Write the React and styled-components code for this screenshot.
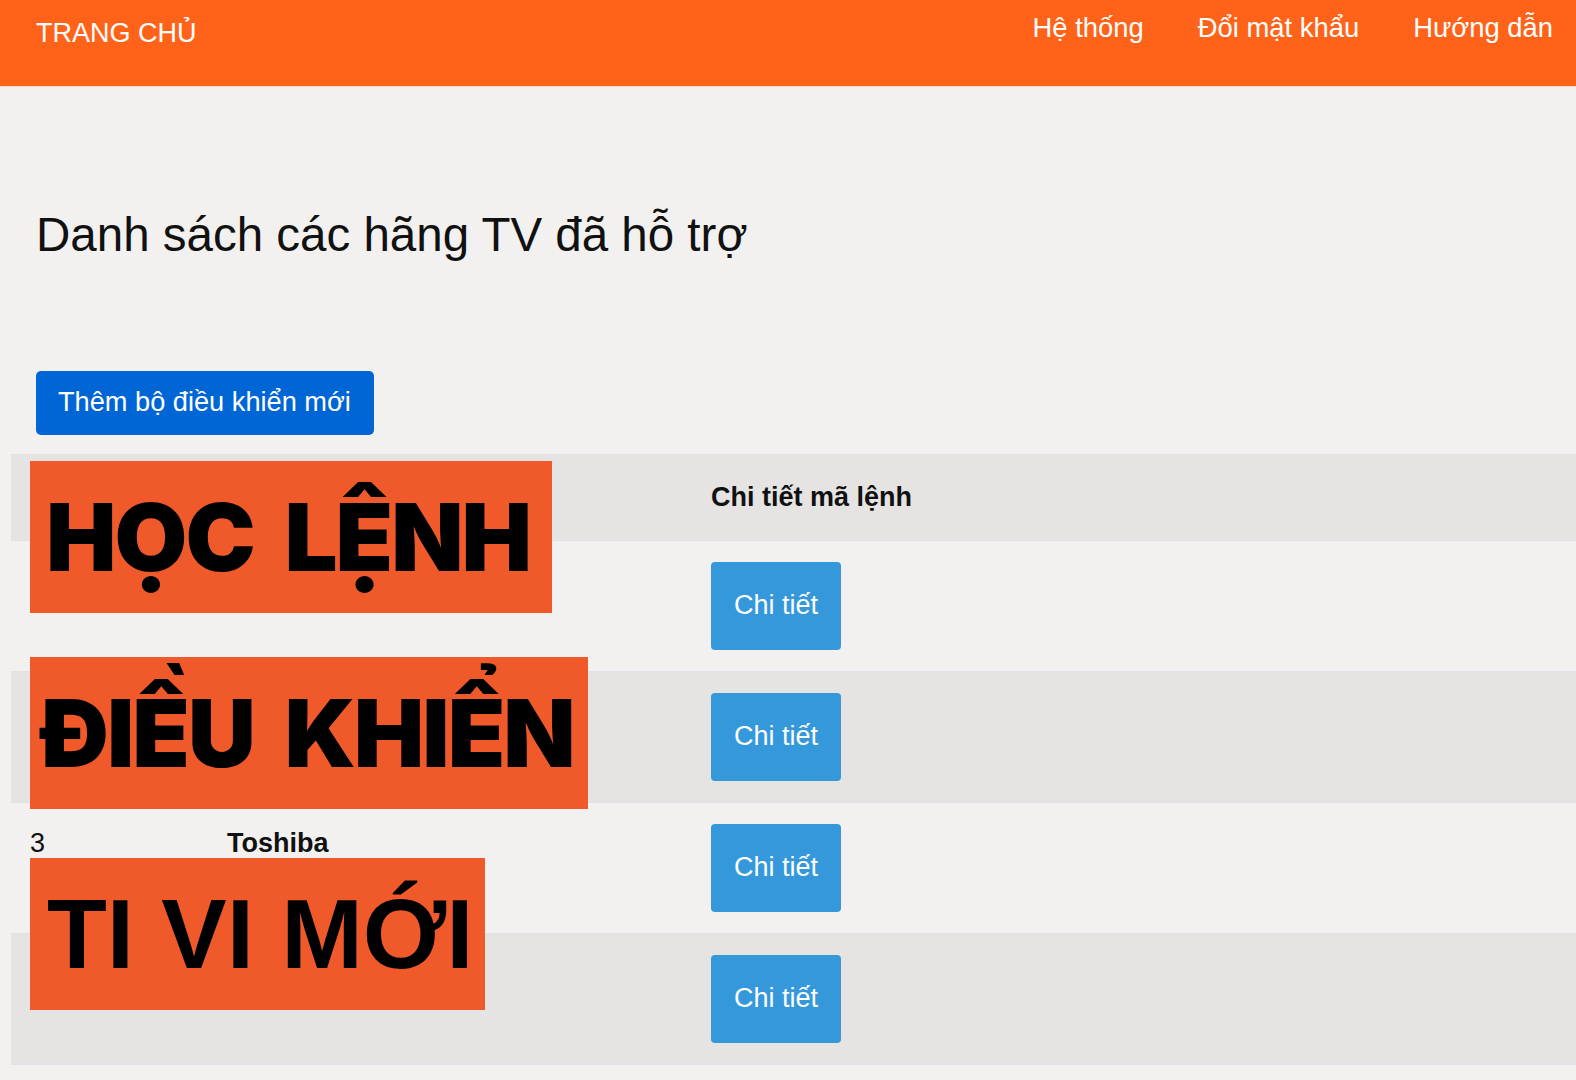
import React from "react";
import styled, { createGlobalStyle } from "styled-components";

const GlobalStyle = createGlobalStyle`
  html, body {
    margin: 0;
    padding: 0;
    background: #f2f1ef;
    font-family: "Liberation Sans", Arial, sans-serif;
    color: #111;
  }
  * {
    box-sizing: border-box;
  }
`;

const Page = styled.div`
  position: relative;
  min-height: 1080px;
  overflow: hidden;
`;

const Navbar = styled.nav`
  height: 87px;
  background: #ff6319;
  border-bottom: 1px solid #f7d9ca;
  display: flex;
  align-items: flex-start;
  justify-content: space-between;
  padding: 0 23px 0 36px;
`;

const Brand = styled.a`
  margin-top: 18px;
  font-size: 27px;
  color: #fff;
  text-decoration: none;
`;

const NavLinks = styled.ul`
  display: flex;
  gap: 54px;
  list-style: none;
  margin: 12px 0 0;
  padding: 0;
`;

const NavLink = styled.li`
  font-size: 27.4px;
  color: #fff;
`;

const Content = styled.main`
  padding: 120px 0 0 36px;
`;

const Heading = styled.h1`
  margin: 0;
  font-size: 47.5px;
  font-weight: 400;
  color: #111;
`;

const AddButton = styled.button`
  margin-top: 109px;
  background: #0066d6;
  color: #fff;
  border: none;
  border-radius: 5px;
  font-family: inherit;
  font-size: 27.2px;
  line-height: 1.43;
  padding: 12px 23px 13px 22px;
`;

const Table = styled.table`
  margin: 19px 0 0 11px;
  width: calc(100% - 11px);
  border-collapse: collapse;
  font-size: 27px;
`;

const Row = styled.tr`
  background: ${(p) => (p.$striped ? "#e5e4e2" : "#f2f1ef")};
  border-top: 1px solid #dfe1e6;
  border-bottom: 1px solid #dfe1e6;
`;

const HeadCell = styled.th`
  text-align: left;
  font-weight: 700;
  line-height: 1.43;
  padding: 23px 19px;
  width: ${(p) => p.$width || "auto"};
`;

const Cell = styled.td`
  vertical-align: top;
  line-height: 1.43;
  padding: 21px 19px 21px;
  font-weight: ${(p) => (p.$bold ? 700 : 400)};
`;

const DetailButton = styled.button`
  width: 130px;
  height: 88px;
  background: #3498db;
  color: #fff;
  border: none;
  border-radius: 4px;
  font-family: inherit;
  font-size: 27px;
`;

const Banner = styled.div`
  position: absolute;
  left: 30px;
  top: ${(p) => p.$top}px;
  width: ${(p) => p.$width}px;
  height: 152px;
  background: #f05a2b;
  display: flex;
  align-items: center;
  padding-left: ${(p) => p.$pad}px;
  color: #000;
  font-family: ${(p) => (p.$plain ? '"Liberation Sans", Arial' : "Inter, \"Noto Sans\"")}, sans-serif;
  font-weight: ${(p) => (p.$plain ? 700 : 900)};
  font-size: ${(p) => (p.$plain ? 98 : 94)}px;
  letter-spacing: ${(p) => (p.$plain ? 0 : -2)}px;
  word-spacing: ${(p) => (p.$plain ? 0 : 14)}px;
  line-height: 1;
  white-space: nowrap;
`;

// rows 1, 2 and 4 are hidden under the banners in the screenshot
const brands = [
  { id: 1, name: "" },
  { id: 2, name: "" },
  { id: 3, name: "Toshiba" },
  { id: 4, name: "" },
];

export default function App() {
  return (
    <Page>
      <GlobalStyle />
      <Navbar>
        <Brand>TRANG CHỦ</Brand>
        <NavLinks>
          <NavLink>Hệ thống</NavLink>
          <NavLink>Đổi mật khẩu</NavLink>
          <NavLink>Hướng dẫn</NavLink>
        </NavLinks>
      </Navbar>

      <Content>
        <Heading>Danh sách các hãng TV đã hỗ trợ</Heading>
        <AddButton>Thêm bộ điều khiển mới</AddButton>
      </Content>

      <Table>
        <thead>
          <Row $striped>
            <HeadCell $width="197px"></HeadCell>
            <HeadCell $width="484px"></HeadCell>
            <HeadCell>Chi tiết mã lệnh</HeadCell>
          </Row>
        </thead>
        <tbody>
          {brands.map((b, i) => (
            <Row key={b.id} $striped={i % 2 === 1}>
              <Cell>{b.name ? b.id : ""}</Cell>
              <Cell $bold>{b.name}</Cell>
              <Cell>
                <DetailButton>Chi tiết</DetailButton>
              </Cell>
            </Row>
          ))}
        </tbody>
      </Table>

      <Banner $top={461} $width={522} $pad={16}>HỌC LỆNH</Banner>
      <Banner $top={657} $width={558} $pad={11}>ĐIỀU KHIỂN</Banner>
      <Banner $top={858} $width={455} $pad={17} $plain>TI VI MỚI</Banner>
    </Page>
  );
}
